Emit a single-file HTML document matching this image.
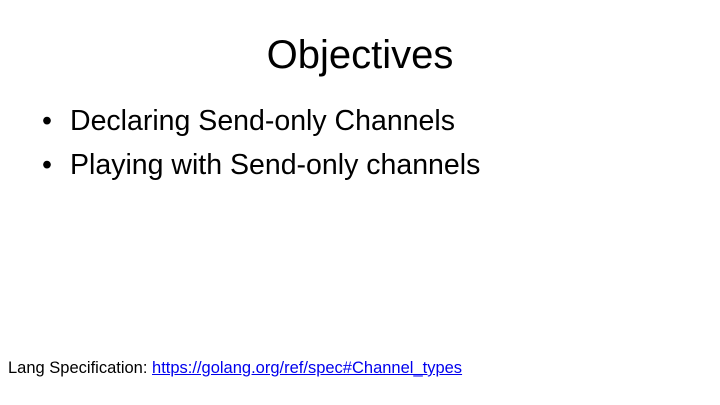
<!DOCTYPE html>
<html><head><meta charset="utf-8"><style>
html,body{margin:0;padding:0;background:#fff;}
body{width:720px;height:405px;position:relative;overflow:hidden;font-family:"Liberation Sans",sans-serif;color:#000;}
.t{position:absolute;left:0;width:720px;top:31px;text-align:center;font-size:40px;line-height:48px;}
.b{position:absolute;left:42px;font-size:28.5px;line-height:34px;white-space:nowrap;}
.b span{position:absolute;left:0;}
.b em{font-style:normal;position:absolute;left:28px;}
.f{position:absolute;left:8px;top:357px;font-size:16.5px;line-height:22px;white-space:nowrap;}
.f a{color:#0000ee;text-decoration:underline;}
</style></head><body>
<div class="t">Objectives</div>
<div class="b" style="top:104px"><span>•</span><em>Declaring Send-only Channels</em></div>
<div class="b" style="top:148px"><span>•</span><em>Playing with Send-only channels</em></div>
<div class="f">Lang Specification: <a>https://golang.org/ref/spec#Channel_types</a></div>
</body></html>
